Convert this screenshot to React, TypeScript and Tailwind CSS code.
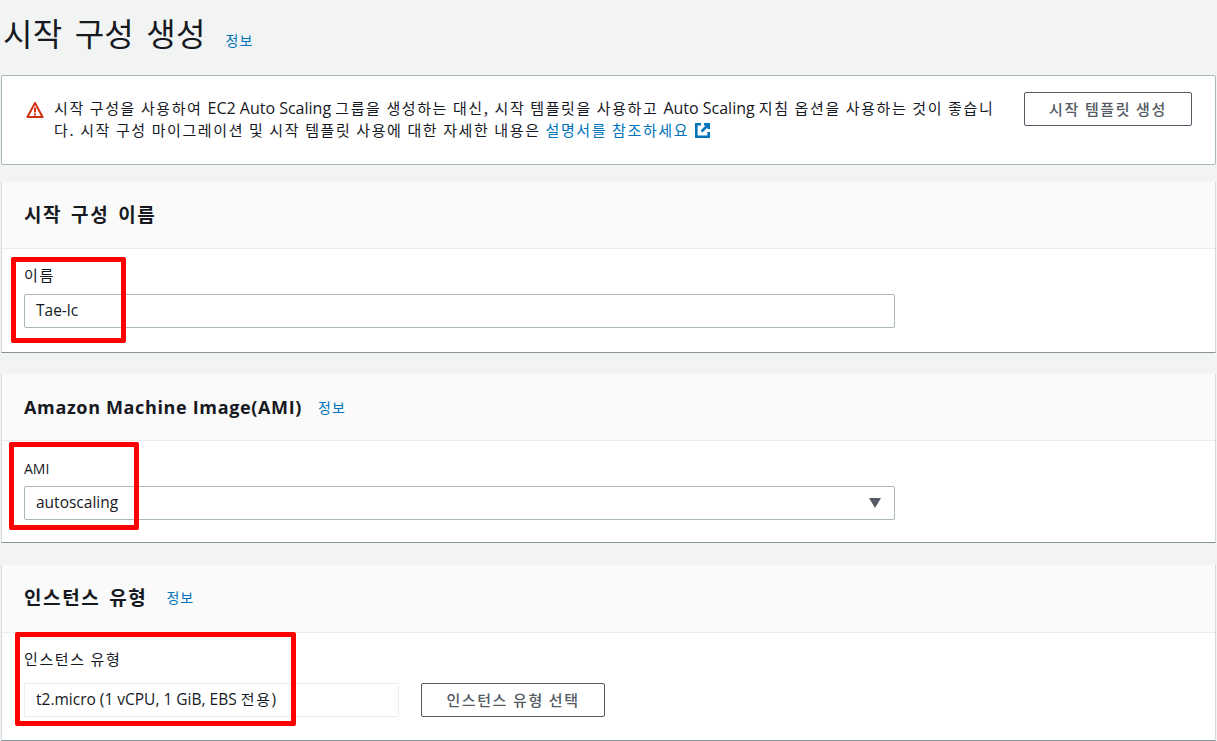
const FONT = "font-['Open_Sans','Noto_Sans_CJK_KR',sans-serif]";
const BODY_KO = "font-['Noto_Sans_CJK_KR',sans-serif] text-[15px] leading-none tracking-[1.6px]";
const HEAD_KO = "font-['Noto_Sans_CJK_KR',sans-serif] text-[19px] leading-none tracking-[1.6px] [word-spacing:3px]";

// hangul runs are wider in the shot than the latin next to them, so they get their own span
function Ko({ text, cls = BODY_KO }: { text: string; cls?: string }) {
  const parts = text.split(/([\uAC00-\uD7A3]+(?:[ ,.]+[\uAC00-\uD7A3]+)*[ ]?)/);
  return (
    <span>
      {parts.map((p, i) =>
        i % 2 === 1 ? (
          <span key={i} className={cls}>
            {p}
          </span>
        ) : (
          p
        ),
      )}
    </span>
  );
}

function InfoLink() {
  return <a className="text-[14px] leading-none tracking-[1px] text-[#0073bb] font-['Noto_Sans_CJK_KR',sans-serif]">정보</a>;
}

function Marker({ className }: { className: string }) {
  return <div className={`absolute rounded-[2px] border-[5px] border-[#ff0000] ${className}`} />;
}

function Card({
  title,
  info,
  gap,
  head,
  children,
  bodyClass,
}: {
  title: string;
  info?: boolean;
  gap?: string;
  head: string;
  children: React.ReactNode;
  bodyClass: string;
}) {
  return (
    <section className="mx-px border-b border-b-[#879596] border-r border-r-[#d5dbdb] border-l border-l-[#d5dbdb] bg-white">
      <div className={`flex items-center border-b border-[#eaeded] bg-[#fafafa] pl-[22px] ${head} ${gap ?? "gap-4"}`}>
        <h2 className="text-[18px] font-bold leading-none tracking-[0.65px] text-[#16191f]">
          <Ko text={title} cls={HEAD_KO} />
        </h2>
        {info && <InfoLink />}
      </div>
      <div className={`pl-[22px] ${bodyClass}`}>{children}</div>
    </section>
  );
}

function Field({ children }: { children: React.ReactNode }) {
  return (
    <div className="flex h-[34px] w-[871px] items-center justify-between rounded-[2px] border border-[#aab7b8] bg-white pl-[11px] pr-[13px] text-[15.5px] text-[#16191f]">
      {children}
    </div>
  );
}

function Label({ text, className }: { text: string; className: string }) {
  return (
    <label className={`block h-[22px] text-[14px] leading-[22px] text-[#16191f] ${className}`}>
      <Ko text={text} />
    </label>
  );
}

export default function App() {
  return (
    <div className={`relative h-[741px] overflow-hidden bg-[#f2f3f3] ${FONT}`}>
      <header className="flex h-[75px] items-center pb-[12px] pl-[3px]">
        <h1 className="text-[32px] font-normal leading-none tracking-[0.2px] text-[#16191f] [word-spacing:5px] font-['Noto_Sans_CJK_KR',sans-serif]">
          시작 구성 생성
        </h1>
        <span className="ml-[20px] mt-[17px]">
          <InfoLink />
        </span>
      </header>

      <div className="mx-px flex h-[90px] justify-between rounded-[2px] border border-[#aab7b8] bg-white pl-6 pr-[23px] pt-4">
        <div className="flex gap-[10px] pt-[5px]">
          <svg className="mt-[4px] shrink-0" width="18" height="18" viewBox="0 0 18 18">
            <path d="M9 2 L16.6 16 H1.4 Z" fill="none" stroke="#d13212" strokeWidth="2" strokeLinejoin="round" />
            <path d="M9 6.5 V11.5" stroke="#d13212" strokeWidth="2" />
            <rect x="8" y="12.5" width="2" height="2" fill="#d13212" />
          </svg>
          <p className="w-[942px] whitespace-nowrap text-[16px] leading-[22px] text-[#16191f]">
            <Ko text="시작 구성을 사용하여 EC2 Auto Scaling 그룹을 생성하는 대신, 시작 템플릿을 사용하고 Auto Scaling 지침 옵션을 사용하는 것이 좋습니" />
            <br />
            <Ko text="다. 시작 구성 마이그레이션 및 시작 템플릿 사용에 대한 자세한 내용은 " />
            <a className="text-[#0073bb]">
              <Ko text="설명서를 참조하세요" />
            </a>
            <svg className="ml-[5px] inline-block align-[-3px]" width="17" height="17" viewBox="0 0 17 17" fill="none" stroke="#0073bb" strokeWidth="2.6">
              <path d="M7 2.3 H2.3 V14.7 H14.7 V10" />
              <path d="M10 2.3 H14.7 V7 M14.7 2.3 L7.5 9.5" />
            </svg>
          </p>
        </div>
        <button className="h-[34px] w-[168px] rounded-[2px] border border-[#545b64] bg-white text-[14px] font-medium text-[#545b64]">
          <Ko text="시작 템플릿 생성" />
        </button>
      </div>

      <div className="mt-[17px]">
        <Card title="시작 구성 이름" head="h-[67px] pb-[3px]" bodyClass="h-[103px] pt-[16px]">
          <Label text="이름" className="mb-[7px]" />
          <Field>Tae-lc</Field>
        </Card>
      </div>

      <div className="mt-[21px]">
        <Card title="Amazon Machine Image(AMI)" info head="h-[67px]" bodyClass="h-[101px] pt-[17px]">
          <Label text="AMI" className="mb-[6px]" />
          <Field>
            <span>autoscaling</span>
            <svg width="12" height="10" viewBox="0 0 12 10">
              <path d="M0 0 H12 L6 10 Z" fill="#545b64" />
            </svg>
          </Field>
        </Card>
      </div>

      <div className="mt-[22px]">
        <Card title="인스턴스 유형" info gap="gap-[19px]" head="h-[68px] pb-[3px]" bodyClass="h-[107px] pt-[16px]">
          <Label text="인스턴스 유형" className="mb-[12px]" />
          <div className="flex items-center gap-[22px]">
            <div className="flex h-[34px] w-[375px] items-center rounded-[2px] border border-[#eaeded] bg-white pl-[11px] text-[15.5px] text-[#16191f]">
              <Ko text="t2.micro (1 vCPU, 1 GiB, EBS 전용)" />
            </div>
            <button className="h-[34px] w-[184px] rounded-[2px] border border-[#545b64] bg-white text-[14px] font-medium text-[#545b64]">
              <Ko text="인스턴스 유형 선택" />
            </button>
          </div>
        </Card>
      </div>

      <Marker className="left-[11px] top-[257px] h-[86px] w-[115px]" />
      <Marker className="left-[9px] top-[442px] h-[88px] w-[130px]" />
      <Marker className="left-[15px] top-[632px] h-[94px] w-[281px]" />
    </div>
  );
}
